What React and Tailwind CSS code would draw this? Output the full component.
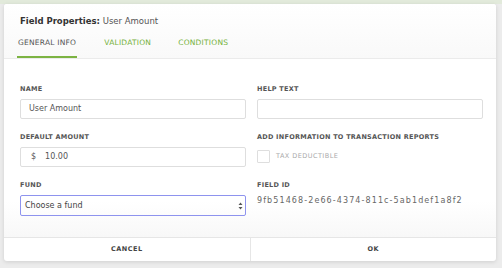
import React from 'react';

const Label = ({ children }) => (
  <div className="text-[6.5px] font-bold tracking-[0.04em] text-[#555] uppercase h-[10px] leading-[10px] mb-[5px]">{children}</div>
);

const App = () => {
  return (
    <div className="w-[502px] h-[268px] bg-[#ececec] overflow-hidden flex flex-col font-['DejaVu_Sans']">
      <div className="h-[4px] bg-[#e2eadb] shrink-0" />
      <div className="pl-[4px] pr-[6px]">
        <div className="bg-white rounded-[3px] shadow-[0_1px_4px_rgba(0,0,0,0.12)] h-[257px] flex flex-col overflow-hidden">
          {/* header */}
          <div className="h-[55px] bg-gradient-to-b from-white to-[#f9f9f9] border-b border-[#ebebeb] px-[16px] flex flex-col shrink-0">
            <div className="pt-[12px] text-[8.5px] text-[#555] leading-[11px]">
              <span className="font-bold text-[#333]">Field Properties:</span> User Amount
            </div>
            <div className="mt-auto -ml-[3px] flex gap-[27px] text-[7.5px] tracking-[0.03em]">
              <div className="text-[#555] border-b-2 border-[#7cb342] pb-[8px] px-[1px]">GENERAL INFO</div>
              <div className="text-[#74b13a] pb-[8px]">VALIDATION</div>
              <div className="text-[#74b13a] pb-[8px]">CONDITIONS</div>
            </div>
          </div>
          {/* body */}
          <div className="flex-1 bg-gradient-to-b from-white via-white via-80% to-[#f8f8f8] pl-[16px] pr-[13px] pt-[25px]">
            <div className="grid grid-cols-2 gap-x-[11px]">
              <div>
                <Label>Name</Label>
                <div className="h-[20px] border border-[#dedede] rounded-[2px] px-[8px] flex items-center text-[8px] text-[#555]">User Amount</div>
              </div>
              <div>
                <Label>Help Text</Label>
                <div className="h-[20px] border border-[#dedede] rounded-[2px]" />
              </div>

              <div className="mt-[13px]">
                <Label>Default Amount</Label>
                <div className="h-[20px] border border-[#dedede] rounded-[2px] px-[10px] flex items-center text-[8px] text-[#555]">
                  <span className="mr-[9px]">$</span>10.00
                </div>
              </div>
              <div className="mt-[13px]">
                <Label>Add information to transaction reports</Label>
                <div className="flex items-center mt-[8px]">
                  <div className="w-[13px] h-[13px] border border-[#dedede] rounded-[1px]" />
                  <span className="ml-[6px] text-[6.5px] tracking-[0.07em] text-[#aaa]">TAX DEDUCTIBLE</span>
                </div>
              </div>

              <div className="mt-[13px]">
                <Label>Fund</Label>
                <div className="h-[21px] border border-[#8e93ee] rounded-[2px] pl-[4px] pr-[2px] flex items-center text-[8px] text-[#444] justify-between">
                  <span>Choose a fund</span>
                  <svg width="5" height="8" viewBox="0 0 5 8"><path d="M2.5 0.5 L4.5 3 L0.5 3 Z M2.5 7.5 L4.5 5 L0.5 5 Z" fill="#555" /></svg>
                </div>
              </div>
              <div className="mt-[13px]">
                <Label>Field ID</Label>
                <div className="text-[8px] tracking-[1.1px] text-[#666] mt-[5px]">9fb51468-2e66-4374-811c-5ab1def1a8f2</div>
              </div>
            </div>
          </div>
          {/* footer */}
          <div className="h-[24px] border-t border-[#e6e6e6] flex shrink-0 text-[6.5px] font-bold tracking-[0.08em] text-[#444]">
            <div className="flex-1 flex items-center justify-center border-r border-[#e6e6e6]">CANCEL</div>
            <div className="flex-1 flex items-center justify-center">OK</div>
          </div>
        </div>
      </div>
    </div>
  );
};

export default App;
